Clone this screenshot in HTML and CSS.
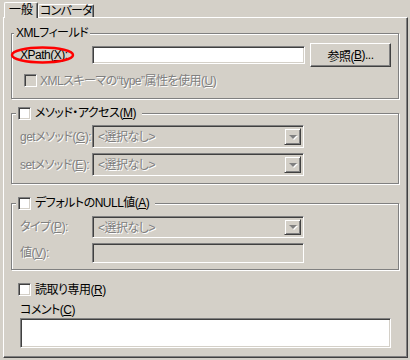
FILE: index.html
```html
<!DOCTYPE html>
<html lang="ja">
<head>
    <meta charset="UTF-8">
    <title>プロパティ</title>
    <link rel="stylesheet" href="styles.css">
</head>
<body>

<!-- Tabs -->
<div class="tabs">
    <div class="tab active">一般</div>
    <div class="tab">コンバータ</div>
</div>

<div class="panel">

    <!-- XML field -->
    <div class="group g-xml">
        <span class="legend">XMLフィールド</span>
        <div class="row row-xpath">
            <label class="lbl xpath">XPath(<u>X</u>):
                <svg class="mark" width="66" height="20" viewBox="0 0 66 20">
                    <ellipse cx="32.5" cy="10" rx="30.5" ry="7.5" fill="none" stroke="#ff0000" stroke-width="2.5"/>
                </svg>
            </label>
            <div class="field txt-xpath"></div>
            <div class="btn">参照(<u>B</u>)...</div>
        </div>
        <div class="check-row dis">
            <span class="check off"></span>
            <span>XMLスキーマの“type”属性を使用(<u>U</u>)</span>
        </div>
    </div>

    <!-- Method access -->
    <div class="group g-method">
        <span class="legend legend-check">
            <span class="check"></span>
            <span>メソッド・アクセス(<u>M</u>)</span>
        </span>
        <div class="row row-sel first">
            <span class="lbl dis">getメソッド(<u>G</u>):</span>
            <div class="field off sel">
                <span class="sel-text dis">&lt;選択なし&gt;</span>
                <span class="drop"><span class="arrow"></span></span>
            </div>
        </div>
        <div class="row row-sel">
            <span class="lbl dis">setメソッド(<u>E</u>):</span>
            <div class="field off sel">
                <span class="sel-text dis">&lt;選択なし&gt;</span>
                <span class="drop"><span class="arrow"></span></span>
            </div>
        </div>
    </div>

    <!-- Default NULL -->
    <div class="group g-null">
        <span class="legend legend-check">
            <span class="check"></span>
            <span>デフォルトのNULL値(<u>A</u>)</span>
        </span>
        <div class="row row-type">
            <span class="lbl dis">タイプ(<u>P</u>):</span>
            <div class="field off sel sel-type">
                <span class="sel-text dis">&lt;選択なし&gt;</span>
                <span class="drop"><span class="arrow"></span></span>
            </div>
        </div>
        <div class="row row-value">
            <span class="lbl dis">値(<u>V</u>):</span>
            <div class="field off txt-value"></div>
        </div>
    </div>

    <div class="check-row readonly">
        <span class="check"></span>
        <span>読取り専用(<u>R</u>)</span>
    </div>

    <div class="comment-label">コメント(<u>C</u>)</div>
    <div class="field comment"></div>

</div>

</body>
</html>
```

FILE: styles.css
```css
body {
    margin: 0;
    background-color: #d4d0c8;
    font-family: "Liberation Sans", "Noto Sans CJK JP", sans-serif;
    font-size: 12px;
    font-feature-settings: "palt";
    letter-spacing: -0.5px;
    white-space: nowrap;
    color: #000;
}
u {
    text-decoration-thickness: 1px;
    text-underline-offset: 1px;
}

/* tabs */
.tabs {
    display: flex;
    align-items: flex-end;
    height: 17px;
    padding-left: 4px;
}
.tab {
    box-sizing: border-box;
    width: 56px;
    height: 13px;
    border-left: 1px solid #fff;
    border-top: 1px solid #fff;
    border-right: 1px solid #404040;
    border-radius: 2px 2px 0 0;
    box-shadow: inset -1px 0 0 #808080;
    text-align: center;
    line-height: 13px;
    letter-spacing: -0.8px;
}
.tab.active {
    width: 34px;
    height: 16px;
    margin-bottom: -1px;
    position: relative;
    z-index: 1;
    background-color: #d4d0c8;
    line-height: 15px;
    letter-spacing: 0;
}

/* panel */
.panel {
    box-sizing: border-box;
    margin-left: 3px;
    width: 405px;
    height: 341px;
    border-left: 1px solid #fff;
    border-top: 1px solid #fff;
    border-right: 1px solid #404040;
    border-bottom: 1px solid #404040;
    box-shadow: inset -1px -1px 0 #808080;
    padding: 15px 0 0 7px;
}

/* etched group boxes */
.group {
    position: relative;
    box-sizing: border-box;
    width: 388px;
    border: 1px solid #808080;
    box-shadow: 1px 1px 0 #fff, inset 1px 1px 0 #fff;
    padding-left: 8px;
}
.g-xml { height: 66px; }
.g-method { height: 71px; margin-top: 14px; }
.g-null { height: 67px; margin-top: 19px; }

.legend {
    position: absolute;
    top: -8px;
    left: 2px;
    padding: 0 2px;
    background-color: #d4d0c8;
    line-height: 14px;
}
.legend-check {
    left: 4px;
    padding: 0 6px 0 2px;
    display: flex;
    align-items: center;
    gap: 4px;
}

/* rows */
.row {
    display: flex;
    align-items: center;
}
.lbl {
    flex: none;
    width: 72px;
    line-height: 14px;
}
.row-xpath { margin-top: 9px; height: 24px; }
.xpath {
    position: relative;
    align-self: stretch;
    display: flex;
    align-items: center;
}
.mark {
    position: absolute;
    left: -10px;
    top: 2px;
}
.row-sel.first { margin-top: 11px; }
.row-sel { margin-top: 5px; height: 23px; }
.row-type { margin-top: 12px; height: 22px; }
.row-value { margin-top: 5px; height: 20px; }

/* sunken fields */
.field {
    box-sizing: border-box;
    border: 1px solid;
    border-color: #808080 #fff #fff #808080;
    box-shadow: inset 1px 1px 0 #404040, inset -1px -1px 0 #d4d0c8;
    background-color: #fff;
}
.field.off { background-color: #d4d0c8; }
.txt-xpath { width: 213px; height: 18px; }
.txt-value { width: 212px; height: 20px; }

.sel {
    display: flex;
    align-items: stretch;
    width: 212px;
    height: 23px;
    padding: 2px;
}
.sel-type { height: 22px; }
.sel-text {
    flex: 1;
    padding-left: 3px;
    line-height: 18px;
}
.drop {
    box-sizing: border-box;
    width: 17px;
    border: 1px solid;
    border-color: #d4d0c8 #404040 #404040 #d4d0c8;
    box-shadow: inset 1px 1px 0 #fff, inset -1px -1px 0 #808080;
    display: flex;
    align-items: center;
    justify-content: center;
}
.arrow {
    width: 0;
    height: 0;
    border-left: 4px solid transparent;
    border-right: 4px solid transparent;
    border-top: 4px solid #808080;
    filter: drop-shadow(1px 1px 0 #fff);
}

/* raised button */
.btn {
    box-sizing: border-box;
    width: 81px;
    height: 24px;
    margin-left: 5px;
    border: 1px solid;
    border-color: #fff #404040 #404040 #fff;
    box-shadow: inset -1px -1px 0 #808080;
    display: flex;
    align-items: center;
    justify-content: center;
}

/* checkboxes */
.check {
    flex: none;
    box-sizing: border-box;
    width: 13px;
    height: 13px;
    border: 1px solid;
    border-color: #808080 #fff #fff #808080;
    box-shadow: inset 1px 1px 0 #404040, inset -1px -1px 0 #d4d0c8;
    background-color: #fff;
}
.check.off { background-color: #d4d0c8; }
.check-row {
    display: flex;
    align-items: center;
    gap: 3px;
    height: 13px;
    margin: 7px 0 0 4px;
    line-height: 14px;
}
.readonly {
    gap: 4px;
    margin: 13px 0 0 7px;
}

.dis {
    color: #808080;
    text-shadow: 1px 1px 0 #fff;
}

/* comment */
.comment-label {
    margin: 7px 0 0 9px;
    line-height: 14px;
}
.comment {
    width: 371px;
    height: 30px;
    margin: 1px 0 0 9px;
}
```
